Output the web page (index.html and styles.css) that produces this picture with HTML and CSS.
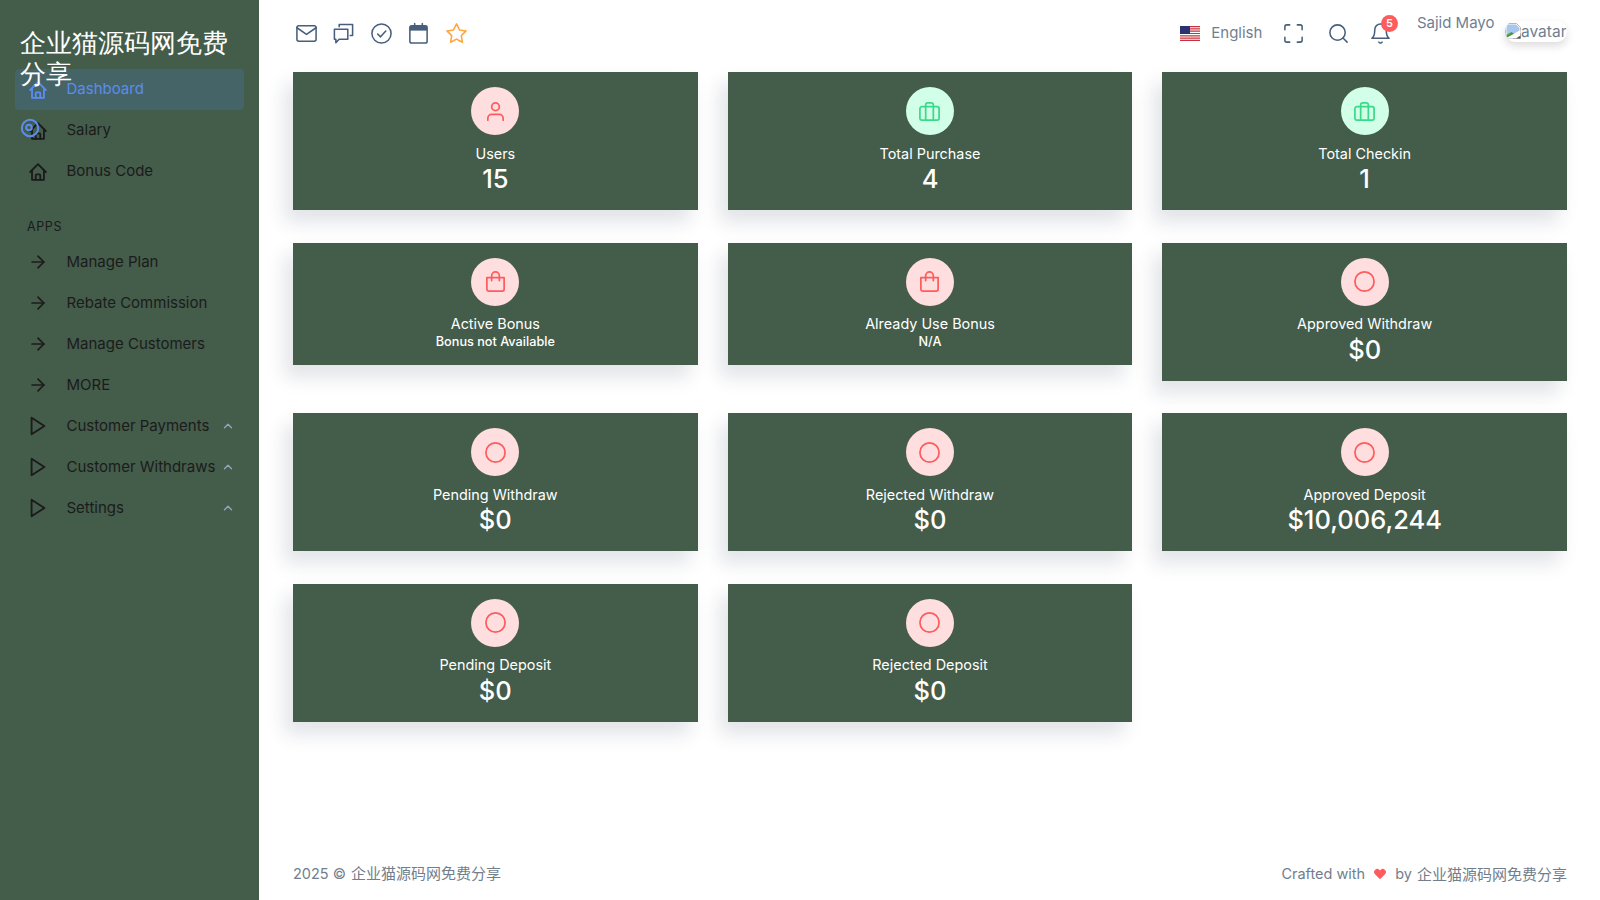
FILE: index.html
```html
<!DOCTYPE html>
<html lang="en">
<head>
<meta charset="utf-8">
<title>企业猫源码网免费分享</title>
<link rel="stylesheet" href="styles.css">
</head>
<body>
<svg class="defs" width="0" height="0" aria-hidden="true">
<defs>
<symbol id="i-home" viewBox="0 0 24 24"><path d="M3.500 12 12 3.500l8.500 8.500"/><path d="M5.500 10.500V20.500h13V10.500"/><path d="M9.500 20.500v-5a1 1 0 0 1 1-1h3a1 1 0 0 1 1 1v5"/></symbol>
<symbol id="i-arrow" viewBox="0 0 24 24"><path d="M5 12h14"/><path d="m12 5 7 7-7 7"/></symbol>
<symbol id="i-play" viewBox="0 0 24 24"><path d="M5 3l14 9-14 9V3z"/></symbol>
<symbol id="i-chev" viewBox="0 0 24 24"><path d="m18 15-6-6-6 6"/></symbol>
<symbol id="i-user" viewBox="0 0 24 24"><path d="M20 21v-2a4 4 0 0 0-4-4H8a4 4 0 0 0-4 4v2"/><circle cx="12" cy="7" r="4"/></symbol>
<symbol id="i-case" viewBox="0 0 24 24"><rect x="2" y="7" width="20" height="14" rx="2"/><path d="M16 21V5a2 2 0 0 0-2-2h-4a2 2 0 0 0-2 2v16"/></symbol>
<symbol id="i-bag" viewBox="0 0 24 24"><path d="M3 8h18v12a2 2 0 0 1-2 2H5a2 2 0 0 1-2-2V8z"/><path d="M8 11V6a4 4 0 0 1 8 0v5"/></symbol>
<symbol id="i-circle" viewBox="0 0 24 24"><circle cx="12" cy="12" r="10"/></symbol>
</defs>
</svg>
<div class="app">
  <aside class="sidebar">
    <div class="brand">企业猫源码网免费分享</div>
    <nav class="menu">
      <a class="item active"><svg class="ico"><use href="#i-home"/></svg><span>Dashboard</span></a>
      <a class="item"><svg class="ico"><use href="#i-home"/></svg><span>Salary</span>
        <svg class="toggle" viewBox="0 0 20 20"><circle cx="10" cy="10" r="8.200"/><circle cx="9" cy="9.500" r="2.800"/></svg>
      </a>
      <a class="item"><svg class="ico"><use href="#i-home"/></svg><span>Bonus Code</span></a>
      <div class="section">APPS</div>
      <a class="item"><svg class="ico small"><use href="#i-arrow"/></svg><span>Manage Plan</span></a>
      <a class="item"><svg class="ico small"><use href="#i-arrow"/></svg><span>Rebate Commission</span></a>
      <a class="item"><svg class="ico small"><use href="#i-arrow"/></svg><span>Manage Customers</span></a>
      <a class="item"><svg class="ico small"><use href="#i-arrow"/></svg><span>MORE</span></a>
      <a class="item"><svg class="ico"><use href="#i-play"/></svg><span>Customer Payments</span><svg class="chev"><use href="#i-chev"/></svg></a>
      <a class="item"><svg class="ico"><use href="#i-play"/></svg><span>Customer Withdraws</span><svg class="chev"><use href="#i-chev"/></svg></a>
      <a class="item"><svg class="ico"><use href="#i-play"/></svg><span>Settings</span><svg class="chev"><use href="#i-chev"/></svg></a>
    </nav>
  </aside>
  <main class="main">
    <header class="topbar">
      <div class="bookmarks">
        <svg class="tb" viewBox="0 0 24 24"><rect x="2" y="4" width="20" height="16" rx="2"/><path d="m22 6-10 7L2 6"/></svg>
        <svg class="tb" viewBox="0 0 24 24"><path d="M7.500 5V2.500h14v11.500h-2.500"/><path d="M2.500 7.500h14v10.500H7.500L4 21.500V18H2.500V7.500z"/></svg>
        <svg class="tb" viewBox="0 0 24 24"><circle cx="12" cy="12" r="10"/><path d="m8 12.500 3 3 5.500-6"/></svg>
        <svg class="tb" viewBox="0 0 24 24"><rect x="3" y="4" width="18" height="18" rx="2"/><path d="M16 1.500V5M8 1.500V5"/><path class="cal-band" d="M3 4h18v5H3z"/></svg>
        <svg class="tb star" viewBox="0 0 24 24"><path d="m12 2 3.100 6.300 6.900 1-5 4.900 1.200 6.900-6.200-3.300-6.200 3.300L7 14.200l-5-4.900 6.900-1L12 2z"/></svg>
      </div>
      <div class="actions">
        <svg class="flag" viewBox="0 0 20 15"><rect width="20" height="15" fill="#fff"/><path d="M0 0h20v1.200H0zM0 2.300h20v1.200H0zM0 4.600h20v1.200H0zM0 6.900h20v1.200H0zM0 9.200h20v1.200H0zM0 11.500h20v1.200H0zM0 13.800h20V15H0z" fill="#c8313e"/><rect width="10" height="8" fill="#2b3270"/></svg>
        <span class="lang">English</span>
        <svg class="tb expand" viewBox="0 0 24 24"><path d="M8 3H5a2 2 0 0 0-2 2v3M21 8V5a2 2 0 0 0-2-2h-3M3 16v3a2 2 0 0 0 2 2h3M16 21h3a2 2 0 0 0 2-2v-3"/></svg>
        <svg class="tb search" viewBox="0 0 24 24"><circle cx="11" cy="11" r="8"/><path d="m21 21-4.300-4.300"/></svg>
        <span class="bell">
          <svg class="tb" viewBox="0 0 24 24"><path d="M18 8a6 6 0 0 0-12 0c0 7-3 9-3 9h18s-3-2-3-9"/><path d="M13.700 21a2 2 0 0 1-3.400 0"/></svg>
          <b class="badge">5</b>
        </span>
        <span class="uname">Sajid Mayo</span>
        <span class="avatar">
          <svg class="broken" viewBox="0 0 16 16"><path class="b-page" d="M.5.500h11l4 4v11H.5z"/><path class="b-sky" d="M1.500 1.500h9.500l3.500 3.500v3l-6 3.500-7 .5z"/><path class="b-hill" d="M1.500 14.500v-2.500l5-3 3 2-3.500 3.500z"/><path class="b-tear" d="M.5 15.500 15.500 7v3l-8 5.500z"/><path class="b-foot" d="M11 15.500l4.500-3v3z"/></svg><span>avatar</span>
        </span>
      </div>
    </header>
    <section class="grid">
      <article class="card"><span class="badge-ic red"><svg><use href="#i-user"/></svg></span><h4>Users</h4><p>15</p></article>
      <article class="card"><span class="badge-ic green"><svg><use href="#i-case"/></svg></span><h4>Total Purchase</h4><p>4</p></article>
      <article class="card"><span class="badge-ic green"><svg><use href="#i-case"/></svg></span><h4>Total Checkin</h4><p>1</p></article>
      <article class="card"><span class="badge-ic red"><svg><use href="#i-bag"/></svg></span><h4>Active Bonus</h4><small>Bonus not Available</small></article>
      <article class="card"><span class="badge-ic red"><svg><use href="#i-bag"/></svg></span><h4>Already Use Bonus</h4><small>N/A</small></article>
      <article class="card"><span class="badge-ic red"><svg><use href="#i-circle"/></svg></span><h4>Approved Withdraw</h4><p>$0</p></article>
      <article class="card"><span class="badge-ic red"><svg><use href="#i-circle"/></svg></span><h4>Pending Withdraw</h4><p>$0</p></article>
      <article class="card"><span class="badge-ic red"><svg><use href="#i-circle"/></svg></span><h4>Rejected Withdraw</h4><p>$0</p></article>
      <article class="card"><span class="badge-ic red"><svg><use href="#i-circle"/></svg></span><h4>Approved Deposit</h4><p>$10,006,244</p></article>
      <article class="card"><span class="badge-ic red"><svg><use href="#i-circle"/></svg></span><h4>Pending Deposit</h4><p>$0</p></article>
      <article class="card"><span class="badge-ic red"><svg><use href="#i-circle"/></svg></span><h4>Rejected Deposit</h4><p>$0</p></article>
    </section>
    <footer class="footer">
      <span>2025 © <span class="cjk">企业猫源码网免费分享</span></span>
      <span class="crafted">Crafted with<svg class="heart" viewBox="0 0 24 24"><path d="M12 21 3.500 12.500a5.300 5.300 0 0 1 7.500-7.500l1 1 1-1a5.300 5.300 0 0 1 7.500 7.500L12 21z"/></svg>by <span class="cjk">企业猫源码网免费分享</span></span>
    </footer>
  </main>
</div>
</body>
</html>
```

FILE: styles.css
```css
* { box-sizing: border-box; }
html, body { margin: 0; height: 100%; }
body {
  font-family: "Inter", "Noto Sans CJK SC", sans-serif;
  font-size: 14px;
  color: #6e6b7b;
  background: #fff;
}
.defs { position: absolute; }
.app { display: flex; height: 900px; overflow: hidden; }

.sidebar {
  width: 259px;
  flex: none;
  background: #445c4a;
  padding: 28px 15px 0;
}
.brand {
  position: relative;
  z-index: 2;
  height: 41px;
  padding-left: 5px;
  font-family: "Liberation Serif", serif;
  font-size: 26px;
  line-height: 31px;
  color: #fff;
}
.menu { display: flex; flex-direction: column; }
.item {
  position: relative;
  display: flex;
  align-items: center;
  height: 41px;
  padding: 0 9px 0 12px;
  color: #1b1b1b;
  font-size: 15px;
  border-radius: 4px;
}
.item span { margin-left: 17.500px; margin-bottom: 2px; flex: 1; white-space: nowrap; }
.item.active { background: #456468; color: #5a8dee; }
.ico {
  width: 22px; height: 22px; flex: none;
  fill: none; stroke: currentColor; stroke-width: 2; stroke-linecap: round; stroke-linejoin: round;
}
.ico.small { transform: scale(.92); }
.toggle {
  position: absolute; left: 5px; top: 8px;
  width: 20px; height: 20px;
  fill: none; stroke: #5a8dee; stroke-width: 2;
}
.chev {
  width: 14px; height: 14px; flex: none;
  fill: none; stroke: #8ea5c0; stroke-width: 2.500; stroke-linecap: round; stroke-linejoin: round;
}
.section {
  padding: 26.500px 0 0 12px;
  height: 49.500px;
  font-size: 12.500px;
  line-height: 15px;
  letter-spacing: .6px;
  color: #1b1b1b;
}

.main {
  flex: 1;
  min-width: 0;
  padding: 0 33px 0 34px;
  display: flex;
  flex-direction: column;
}
.topbar {
  height: 72px;
  display: flex;
  justify-content: space-between;
  flex: none;
}
.bookmarks { display: flex; align-items: center; gap: 14.600px; height: 66px; padding-left: 1.500px; }
.tb {
  width: 23px; height: 23px; flex: none;
  fill: none; stroke: #475f7b; stroke-width: 1.600; stroke-linecap: round; stroke-linejoin: round;
}
.tb .cal-band { fill: #475f7b; stroke: none; }
.tb.star { stroke: #ffa53d; }
.actions { display: flex; align-items: center; height: 66px; }
.flag { width: 20px; height: 15px; flex: none; }
.lang { margin: -2px 0 0 11.500px; color: #6f7f92; font-size: 15px; }
.expand { margin-left: 20px; }
.search { margin-left: 21.500px; }
.bell { position: relative; margin-left: 19px; height: 23px; }
.badge {
  position: absolute; left: 12px; top: -7px;
  width: 17px; height: 17px; border-radius: 50%;
  background: #ff5b5c; color: #fff;
  font-size: 11px; font-weight: 600; line-height: 17px; text-align: center;
}
.uname { margin: -21px 0 0 25px; color: #6f7f92; font-size: 15px; }
.avatar {
  display: flex; align-items: center;
  margin: -4px 0 0 10.500px;
  width: 62px; height: 21px;
  border-radius: 20px;
  background: #fff;
  box-shadow: 0 4px 8px rgba(0, 0, 0, .14);
  color: #6f7f92;
  font-size: 15.500px;
  overflow: hidden;
}
.broken { width: 16px; height: 16px; flex: none; }
.b-page { fill: #fff; stroke: #b5b5b5; stroke-width: 1; }
.b-sky { fill: #a9c6ec; }
.b-hill { fill: #4e9a3b; }
.b-tear { fill: #fff; }
.b-foot { fill: #555; }

.grid {
  display: grid;
  grid-template-columns: repeat(3, 1fr);
  column-gap: 30px;
  row-gap: 32.600px;
  align-items: start;
}
.card {
  background: #445c4a;
  color: #fff;
  padding: 15px 15px 0;
  display: flex;
  flex-direction: column;
  align-items: center;
  box-shadow: -8px 12px 18px 0 rgba(25, 42, 70, .13);
}
.card:has(p) { height: 138px; }
.card:has(small) { height: 122px; }
.badge-ic {
  width: 48px; height: 48px; border-radius: 50%;
  display: flex; align-items: center; justify-content: center;
  flex: none;
}
.badge-ic svg {
  width: 23px; height: 23px;
  fill: none; stroke: currentColor; stroke-width: 1.800; stroke-linecap: round; stroke-linejoin: round;
}
.badge-ic.red { background: #ffdedf; color: #ff5b5c; }
.badge-ic.green { background: #d2ffe8; color: #39da8a; }
.card h4 { margin: 8.500px 0 0; font-size: 14.400px; font-weight: 400; line-height: 20px; }
.card p { margin: .5px 0 0; font-size: 25.500px; font-weight: 500; line-height: 30px; }
.card small { font-size: 12.700px; font-weight: 500; line-height: 16px; }

.footer {
  margin-top: auto;
  height: 37px;
  display: flex;
  justify-content: space-between;
  color: #727e8c;
  font-size: 14.500px;
  line-height: 20px;
}
.cjk { font-family: "Noto Sans CJK SC", sans-serif; font-size: 15px; margin-left: 1px; }
.crafted { display: flex; align-items: center; height: 22px; white-space: pre; }
.heart { width: 14px; height: 14px; margin: 0 8px; fill: #ff5b5c; }
```
